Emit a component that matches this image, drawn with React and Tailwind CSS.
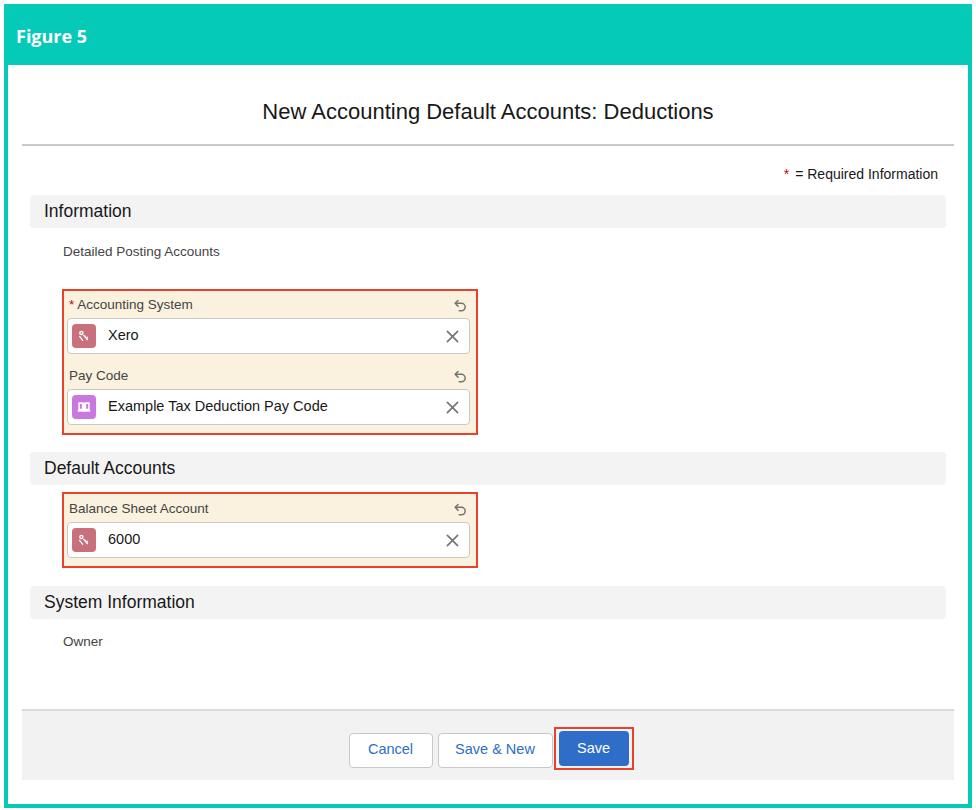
import React from "react";

const ui = { fontFamily: '"Liberation Sans", Arial, sans-serif' };

function UndoIcon() {
  return (
    <svg width="15" height="15" viewBox="0 0 24 24" fill="none" stroke="#747474" strokeWidth="2.4" strokeLinecap="round" strokeLinejoin="round">
      <path d="M8 13 3.5 8.5 8 4" />
      <path d="M4 8.5h9.5a6 6 0 0 1 0 12H10" />
    </svg>
  );
}

function ClearIcon() {
  return (
    <svg width="13" height="13" viewBox="0 0 14 14" fill="none" stroke="#747474" strokeWidth="1.8" strokeLinecap="round">
      <path d="M1.5 1.5 12.5 12.5M12.5 1.5 1.5 12.5" />
    </svg>
  );
}

function KeyIcon() {
  return (
    <div className="w-6 h-6 rounded-[4px] bg-[#c8707b] flex items-center justify-center">
      <svg width="14" height="14" viewBox="0 0 16 16" fill="white">
        <circle cx="5" cy="4.5" r="2.6" />
        <path d="M6.2 6.2 11.5 13l1.4-1.1-1-1.3 1-.8-.9-1.1-1 .8-1.6-2z" />
        <circle cx="5" cy="4.5" r="1" fill="#c8707b" />
        <path d="M3 8.5 6.5 13" stroke="white" strokeWidth="1.4" strokeLinecap="round" />
      </svg>
    </div>
  );
}

function BookIcon() {
  return (
    <div className="w-6 h-6 rounded-[4px] bg-[#c878df] flex items-center justify-center">
      <svg width="14" height="14" viewBox="0 0 16 16" fill="white">
        <path d="M1.5 2.5h5a1.5 1.5 0 0 1 1.5 1.5v8.5H1.5z" />
        <path d="M14.5 2.5h-5A1.5 1.5 0 0 0 8 4v8.5h6.5z" />
        <path d="M0.8 11.8h14.4v1.6H0.8z" />
        <path d="M3.3 4.5h2.2v5.5H3.3zM10.5 4.5h2.2v5.5h-2.2z" fill="#c878df" />
      </svg>
    </div>
  );
}

function LookupField({ label, required, value, icon, className = "" }) {
  return (
    <div className={className}>
      <div className="flex items-center justify-between pl-[2px] pr-[2px] h-[18px]">
        <span className="text-[13.5px] text-[#444444] leading-[18px]">
          {required && <span className="text-[#ba0517] mr-[3px]">*</span>}
          {label}
        </span>
        <UndoIcon />
      </div>
      <div className="mt-[4px] h-[36px] bg-white border border-[#c9c9c9] rounded-[4px] flex items-center pl-[4px] pr-[10px]">
        {icon}
        <span className="ml-[12px] text-[14.5px] text-[#181818] flex-1">{value}</span>
        <ClearIcon />
      </div>
    </div>
  );
}

function SectionHeader({ title, className = "" }) {
  return (
    <div className={`mx-[8px] h-[33px] bg-[#f3f3f3] rounded-[4px] flex items-center pl-[14px] ${className}`}>
      <span className="text-[17.5px] text-[#181818]">{title}</span>
    </div>
  );
}

export default function App() {
  return (
    <div className="w-[976px] h-[810px] bg-white p-[4px] pb-[2px]" style={ui}>
      <div className="h-full border-4 border-[#06cab8] flex flex-col">
        <div className="h-[58px] bg-[#06cab8] flex items-center pl-[8px] -mt-px">
          <span className="text-white text-[18px] font-bold" style={{ fontFamily: '"Open Sans", sans-serif' }}>
            Figure 5
          </span>
        </div>

        <div className="flex-1 flex flex-col px-[14px]">
          <h1 className="pt-[34px] text-center text-[22px] leading-[26px] text-[#181818]">
            New Accounting Default Accounts: Deductions
          </h1>
          <div className="mt-[19px] h-[2px] bg-[#c9c9c9]" />

          <div className="mt-[18px] text-right pr-[16px] text-[14px] leading-[20px] text-[#181818]">
            <span className="text-[#ba0517] mr-[6px]">*</span>= Required Information
          </div>

          <SectionHeader title="Information" className="mt-[11px]" />
          <div className="mt-[15px] pl-[41px] text-[13.5px] leading-[18px] text-[#444444]">
            Detailed Posting Accounts
          </div>

          <div className="mt-[28px] ml-[40px] w-[416px] border-2 border-[#e8412c] bg-[#faf1de] pt-[5px] pb-[8px] pl-[3px] pr-[6px]">
            <LookupField label="Accounting System" required value="Xero" icon={<KeyIcon />} />
            <LookupField label="Pay Code" value="Example Tax Deduction Pay Code" icon={<BookIcon />} className="mt-[13px]" />
          </div>

          <SectionHeader title="Default Accounts" className="mt-[17px]" />

          <div className="mt-[7px] ml-[40px] w-[416px] border-2 border-[#e8412c] bg-[#faf1de] pt-[6px] pb-[8px] pl-[3px] pr-[6px]">
            <LookupField label="Balance Sheet Account" value="6000" icon={<KeyIcon />} />
          </div>

          <SectionHeader title="System Information" className="mt-[18px]" />
          <div className="mt-[14px] pl-[41px] text-[13.5px] leading-[18px] text-[#444444]">Owner</div>

          <div className="mt-auto mb-[24px] h-[71px] bg-[#f3f2f2] border-t-2 border-[#dddbda] flex justify-center items-start pt-[19px] pl-[6px]">
            <div className="flex items-center gap-[5px] mt-[-3px]">
              <button className="mt-[3px] h-[35px] w-[84px] bg-white border border-[#c9c9c9] rounded-[4px] text-[14.5px] text-[#2e6ec8]">
                Cancel
              </button>
              <button className="mt-[3px] h-[35px] w-[115px] bg-white border border-[#c9c9c9] rounded-[4px] text-[14.5px] text-[#2e6ec8]">
                Save &amp; New
              </button>
              <div className="-ml-[4px] border-2 border-[#e8412c] px-[3px] py-[2px]">
                <button className="h-[35px] w-[70px] bg-[#2e6ec8] rounded-[4px] text-[14.5px] text-white">
                  Save
                </button>
              </div>
            </div>
          </div>
        </div>
      </div>
    </div>
  );
}
